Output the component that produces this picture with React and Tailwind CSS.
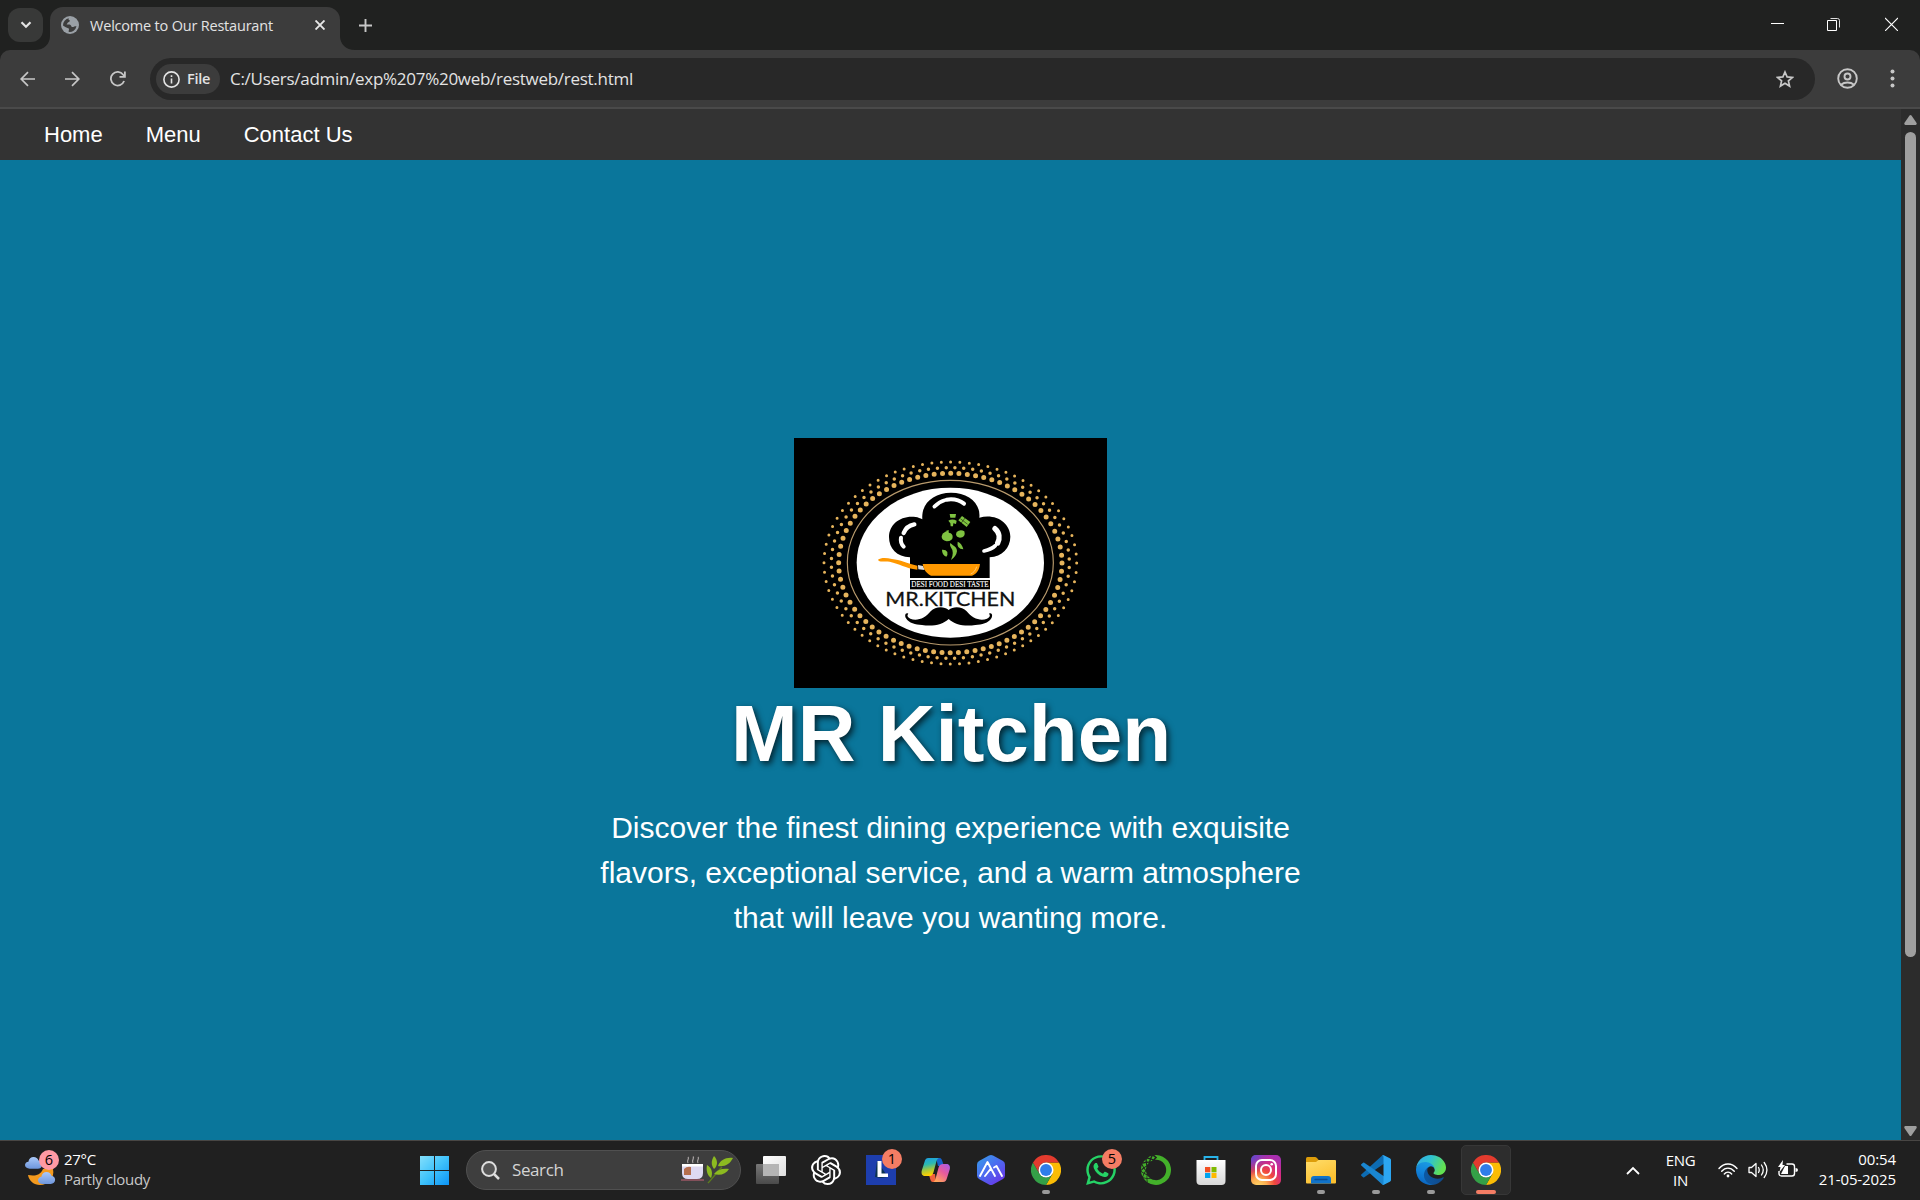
import React from "react";
import { SiOpenai, SiAnaconda } from "react-icons/si";
import { FaWhatsapp } from "react-icons/fa";

const UI = "font-['Open_Sans','Noto_Sans',sans-serif]";

function TabStrip() {
  return (
    <div className="flex h-[50px] items-start bg-[#202120]">
      <button className="ml-2 mt-2 flex h-[34px] w-[35px] items-center justify-center rounded-[12px] bg-[#383938]">
        <svg width="12" height="8" viewBox="0 0 12 8" fill="none" stroke="#e3e3e3" strokeWidth="2.2">
          <path d="M1.5 1.2 6 5.7l4.500-4.500" />
        </svg>
      </button>
      <svg className="-ml-2 mt-[36px] shrink-0" width="15" height="14" viewBox="0 0 15 14" fill="#3c3c3c">
        <path d="M15 0v14H0C9 14 15 8 15 0z" />
      </svg>
      <div className="mt-[7px] flex h-[43px] w-[290px] items-center rounded-t-[13px] bg-[#3c3c3c] pl-[11px] pr-[15px]">
        <svg width="18" height="18" viewBox="0 0 18 18" className="-mt-[7px]">
          <circle cx="9" cy="9" r="9" fill="#9aa0a6" />
          <path d="M8 2.300c-1 1-.3 1.700.6 2C9.500 5 8 6 7 6.500c-1 .5-.5 1.500-1.500 2 1 .3 3-.2 4 .5 1.200.9.600 1.800 1.500 2 1.200.3 2.500-1 4.500-.700A7 7 0 0 1 7.500 15.800c.5-.8 0-1.500.5-2.300.3-.8-.5-1.300-1.500-1.500C5 11.500 3.500 10.500 2 9.500A7 7 0 0 1 8 2.300z" fill="#3c3c3c" />
          <path d="M12 2.700c-1 .8-1.500 1.500-.5 2.300 1 .6 1.500.200 2 1.200.4.800 1.200 1 2 .8A7 7 0 0 0 12 2.700z" fill="#9aa0a6" />
        </svg>
        <span className="-mt-[6px] ml-[11px] whitespace-nowrap text-[14.500px] leading-5 tracking-[-0.2px] text-[#e3e3e3]">Welcome to Our Restaurant</span>
        <svg className="-mt-[7px] ml-auto" width="10" height="10" viewBox="0 0 10 10" stroke="#e8e8e8" strokeWidth="1.900">
          <path d="m.5.5 9 9M9.500.5l-9 9" />
        </svg>
      </div>
      <svg className="mt-[36px] shrink-0" width="15" height="14" viewBox="0 0 15 14" fill="#3c3c3c">
        <path d="M0 0v14h15C6 14 0 8 0 0z" />
      </svg>
      <svg className="ml-[4px] mt-[19px] shrink-0" width="13" height="13" viewBox="0 0 13 13" stroke="#c7c7c7" strokeWidth="1.900">
        <path d="M6.500 0v13M0 6.500h13" />
      </svg>
      <div className="ml-auto mr-[22px] mt-[17px] flex items-center">
        <svg width="13" height="14" viewBox="0 0 13 14" stroke="#fff" strokeWidth="1"><path d="M0 6.500h13" /></svg>
        <svg className="ml-[43px]" width="13" height="14" viewBox="0 0 13 14" fill="none" stroke="#fff">
          <path d="M.5 3.500h9v10h-9z" />
          <path d="M3.500 1.500h7a2 2 0 0 1 2 2v7" stroke="#ddd" />
        </svg>
        <svg className="ml-[45px]" width="13" height="14" viewBox="0 0 13 14" stroke="#fff" strokeWidth="1.100"><path d="m0 1 13 13M13 1 0 14" /></svg>
      </div>
    </div>
  );
}

function Toolbar() {
  return (
    <div className="bg-[#202120]">
      <div className="flex h-[59px] items-center rounded-t-[10px] border-b-2 border-[#4a4a4a] bg-[#3c3c3c] pl-[20px]">
        <svg width="15" height="16" viewBox="0 0 15 16" fill="none" stroke="#c7c7c7" strokeWidth="1.700">
          <path d="M15 8H1.500M8 1.200 1.200 8 8 14.800" />
        </svg>
        <svg className="ml-[30px]" width="15" height="16" viewBox="0 0 15 16" fill="none" stroke="#c7c7c7" strokeWidth="1.700">
          <path d="M0 8h13.500M7 1.200 13.800 8 7 14.800" />
        </svg>
        <svg className="ml-[30px]" width="16" height="16" viewBox="0 0 16 16" fill="none" stroke="#c7c7c7" strokeWidth="1.800">
          <path d="M14.100 10A6.800 6.800 0 1 1 13.200 3.700L14.600 5.500M14.900.5v5.400H9.500" />
        </svg>
        <div className="ml-[24px] mt-px flex h-[42px] w-[1665px] items-center rounded-full bg-[#282828] pl-[6px] pr-[21px]">
          <div className="flex h-[30px] w-[64px] items-center rounded-full bg-[#3c3c3c] pl-[7px]">
            <svg width="17" height="17" viewBox="0 0 17 17" fill="none" stroke="#e3e3e3" strokeWidth="1.600">
              <circle cx="8.500" cy="8.500" r="7.600" />
              <path d="M8.500 7.500v5M8.500 4.200v1.900" />
            </svg>
            <span className="ml-[7px] text-[14.500px] font-semibold leading-5 tracking-[-0.3px] text-[#e3e3e3]">File</span>
          </div>
          <span className="ml-[10px] whitespace-nowrap text-[17px] leading-6 tracking-[-0.280px] text-[#e3e3e3]">C:/Users/admin/exp%207%20web/restweb/rest.html</span>
          <svg className="ml-auto" width="18" height="18" viewBox="0 0 18 18" fill="none" stroke="#c7c7c7" strokeWidth="1.700">
            <path d="m9 2 2.100 4.900 5.300.5-4 3.500 1.200 5.200L9 13.300l-4.600 2.800 1.200-5.200-4-3.500 5.300-.5z" />
          </svg>
        </div>
        <svg className="ml-[22px]" width="21" height="21" viewBox="0 0 21 21" fill="none" stroke="#c7c7c7" strokeWidth="1.900">
          <circle cx="10.500" cy="10.500" r="9.300" />
          <circle cx="10.500" cy="8.500" r="3" />
          <path d="M4 16.800c3.500-3 9.500-3 13 0" />
        </svg>
        <svg className="ml-[32px]" width="5" height="19" viewBox="0 0 5 19" fill="#c7c7c7">
          <circle cx="2.500" cy="2.500" r="2" /><circle cx="2.500" cy="9.500" r="2" /><circle cx="2.500" cy="16.500" r="2" />
        </svg>
      </div>
    </div>
  );
}

function KitchenLogo() {
  return (
    <svg width="313" height="250" viewBox="42 39 939 750" className="block bg-black">
      <g fill="none" stroke="#e6b45c" strokeLinecap="round">
        <ellipse cx="511" cy="414" rx="335" ry="269" strokeWidth="15" pathLength="76" strokeDasharray="0 1" />
        <ellipse cx="511" cy="414" rx="357" ry="286" strokeWidth="10.500" pathLength="76" strokeDasharray="0 1" strokeDashoffset="0.5" />
        <ellipse cx="511" cy="414" rx="379" ry="303" strokeWidth="9" pathLength="76" strokeDasharray="0 1" />
      </g>
      <ellipse cx="511" cy="413" rx="309" ry="247" fill="none" stroke="#b99b6d" strokeWidth="3.500" />
      <ellipse cx="511" cy="413" rx="281" ry="225" fill="#fff" />
      <path d="M390 459V397C350 396 327 370 327 336c0-38 35-66 80-60 7 1 14 4 20 7-4-48 34-80 86-80s90 32 85 75c48-14 93 15 93 57 0 33-25 60-62 62v62z" fill="#000" />
      <g fill="none" stroke="#fff" strokeLinecap="round">
        <path d="M463 245c11-11 20-16 31-19" strokeWidth="11" />
        <path d="M500 224c20-3 38 1 52 12" strokeWidth="12" />
        <path d="M403 298c-17 3-27 13-32 26" strokeWidth="13" />
        <path d="M363 338c-2 11 2 21 8 27" strokeWidth="12" />
        <path d="M645 311c14 12 15 29 8 43" strokeWidth="16" />
        <path d="M646 362c-8 8-20 13-34 16" strokeWidth="11" />
      </g>
      <g fill="#7fc241">
        <path d="M509 267h19l-2 11h-15zM505 287q12-7 25 0l-2 10-8-2-1 9h-7l-1-9z" />
        <path d="m546 273 25 18-11 15-25-20z" />
        <path d="m541 281 22 17m-8-19-12 16" stroke="#000" strokeWidth="1.500" />
        <path d="M494 322q8-7 14 2 10 1 10 12 0 12-18 13-16-3-15-15 2-10 9-12zM497 318l9-3v6z" />
        <path d="M530 321q11-9 23-2 4 13-6 18-17 4-19-9z" />
        <path d="M511 354q-3 8 1 12 12 15 1 39 16-11 18-26 0-12-12-18zM533 350q12 4 17 23-21-1-17-23zM486 374q12-1 16 7 2 9-3 14-13-4-13-21z" />
      </g>
      <path d="M294 404c8-6 24-6 42-2 25 2 44 13 76 20v12c-37-5-53-17-83-24-20-2-31 3-35-6z" fill="#ff9800" />
      <path d="m414 420 15 3 5 12-19-2z" fill="#ddd" />
      <path d="M428 417h172c-2 19-11 30-24 35H453c-15-8-22-18-25-35z" fill="#ff9800" />
      <path d="M590 425q-5 17-18 22" fill="none" stroke="#ffd9a0" strokeWidth="2" />
      <rect x="390" y="465" width="240" height="28" />
      <text x="394" y="487" textLength="232" lengthAdjust="spacingAndGlyphs" fill="#fff" stroke="#fff" strokeWidth="0.4" className="font-['Liberation_Serif',serif] text-[25px]">DESI FOOD DESI TASTE</text>
      <text x="316" y="543" textLength="390" lengthAdjust="spacingAndGlyphs" fill="#111" stroke="#111" strokeWidth="0.8" className="font-['Lato',sans-serif] text-[57px]">MR.KITCHEN</text>
      <path d="M506 555c-14-12-40-11-54 4-16 21-42 31-61 22-9-4-11-11-6-15-9-5-12 6-7 14 9 15 28 19 48 20 32 5 63-1 80-18 17 17 48 23 80 18 20-1 39-5 48-20 5-8 2-19-7-14 5 4 3 11-6 15-19 9-45-1-61-22-14-15-40-16-54-4z" />
    </svg>
  );
}

function Page() {
  return (
    <div className="flex h-[1031px]">
      <div className="flex w-[1901px] flex-col bg-[#0a769b] font-['Liberation_Sans',Arial,sans-serif] text-white">
        <nav className="flex h-[51px] items-center gap-[43px] bg-[#333] pl-[44px] text-[22px] leading-[25px]">
          <a>Home</a>
          <a>Menu</a>
          <a>Contact Us</a>
        </nav>
        <main className="flex flex-1 flex-col items-center pt-[278px]">
          <KitchenLogo />
          <h1 className="pl-px text-[80px] font-bold leading-[92px] [text-shadow:2.5px_2.5px_6.25px_rgba(0,0,0,0.7)]">MR Kitchen</h1>
          <p className="mt-[25px] w-[720px] text-center text-[30px] leading-[45px]">
            Discover the finest dining experience with exquisite flavors, exceptional service, and a warm atmosphere that will leave you wanting more.
          </p>
        </main>
      </div>
      <div className="flex w-[19px] flex-col items-center bg-[#2c2c2c] pt-[6px]">
        <svg width="13" height="10" viewBox="0 0 13 10" fill="#9f9f9f"><path d="M5.500.6q1-1 2 0L12.600 8q.5 1.800-1 2H1.400q-1.500-.2-1-2z" /></svg>
        <div className="mt-[7px] h-[825px] w-[11px] rounded-full bg-[#9f9f9f]" />
        <svg className="mb-[4px] mt-auto" width="13" height="10" viewBox="0 0 13 10" fill="#9f9f9f"><path d="M5.500 9.400q1 1 2 0L12.600 2q.5-1.800-1-2H1.400q-1.500.2-1 2z" /></svg>
      </div>
    </div>
  );
}

function Chrome() {
  return (
    <svg width="30" height="30" viewBox="0 0 48 48">
      <path d="M24 12h20.800A24 24 0 0 1 24 48l10.400-18z" fill="#fbbc05" />
      <path d="M3.200 12A24 24 0 0 0 24 48l10.400-18A12 12 0 0 1 13.600 30z" fill="#34a047" />
      <path d="M3.200 12A24 24 0 0 1 44.800 12H24a12 12 0 0 0-10.400 18z" fill="#e33b2e" />
      <circle cx="24" cy="24" r="12" fill="#fff" />
      <circle cx="24" cy="24" r="9.500" fill="#2f7de9" />
    </svg>
  );
}

function TaskView() {
  return (
    <svg width="30" height="30" viewBox="0 0 30 30">
      <defs>
        <linearGradient id="tvA" x2="0" y2="1"><stop stopColor="#777" /><stop offset="1" stopColor="#4a4a4a" /></linearGradient>
        <linearGradient id="tvB" x2="1" y2="1"><stop stopColor="#fff" /><stop offset="1" stopColor="#dedede" /></linearGradient>
      </defs>
      <rect y="9" width="23" height="20" rx="1" fill="url(#tvA)" />
      <rect x="7" y="1" width="23" height="20" rx="1" fill="url(#tvB)" />
      <path d="M7 9h16v12H7z" fill="#b5b5b5" />
    </svg>
  );
}

function LApp() {
  return (
    <svg width="30" height="30" viewBox="0 0 30 30">
      <path d="M0 0h30v30H0z" fill="#1d3eae" />
      <path d="m11 6-2 16 6 1 7-1z" fill="#0c3350" />
      <path d="M11.500 6h4v12.500H22V22H11.500z" fill="#fff" />
    </svg>
  );
}

function Copilot() {
  return (
    <svg width="30" height="30" viewBox="0 0 30 30">
      <defs>
        <linearGradient id="cpA" x2="0.2" y2="1"><stop stopColor="#1b9de8" /><stop offset=".4" stopColor="#2cb9b0" /><stop offset=".7" stopColor="#a5c83c" /><stop offset="1" stopColor="#ffd000" /></linearGradient>
        <linearGradient id="cpB" x1="1" x2="0.3" y2="1"><stop stopColor="#a35cf0" /><stop offset=".5" stopColor="#e85a9c" /><stop offset="1" stopColor="#ffa45c" /></linearGradient>
      </defs>
      <path d="M15 3h3.500c2 0 2.500 2 3.300 4.500L23 11h-6z" fill="#1460c9" />
      <path d="M15 27h-3c-2.200 0-2.500-2-3.400-5L7.500 19H14z" fill="#f0603c" />
      <path d="M7.500 3H18c-1.500.5-2 1.500-2.600 3.500l-3 11C11.500 20.500 10 21 8 21H4c-3 0-4-2.500-3.200-5.500L3.500 7C4.300 4.500 5 3 7.500 3z" fill="url(#cpA)" />
      <path d="M22 27H12c1.500-.5 2-1.500 2.600-3.500l3-11C18.500 9.500 20 9 22 9h3.500c3 0 4 2.500 3.200 5.500L26 23c-.8 2.500-1.500 4-4 4z" fill="url(#cpB)" />
    </svg>
  );
}

function HexApp() {
  return (
    <svg width="30" height="30" viewBox="0 0 30 30">
      <defs><linearGradient id="hx" x2="0.8" y2="1"><stop stopColor="#35a0e8" /><stop offset=".5" stopColor="#4b6cf0" /><stop offset="1" stopColor="#6a35e8" /></linearGradient></defs>
      <path d="M13 .6q2-1 4 0l10 5.500q2 1.200 2 3.400v11q0 2.200-2 3.400l-10 5.500q-2 1-4 0L3 23.900q-2-1.200-2-3.400v-11q0-2.200 2-3.400z" fill="url(#hx)" />
      <path d="m4 21 7.500-14 7.500 14M9 21l5.500-7M18 12.500l2.500-1.500L26 21" fill="none" stroke="#fff" strokeWidth="1.900" strokeLinecap="round" strokeLinejoin="round" />
    </svg>
  );
}

function Store() {
  return (
    <svg width="30" height="30" viewBox="0 0 30 30">
      <defs><linearGradient id="st" x2="0" y2="1"><stop stopColor="#fff" /><stop offset="1" stopColor="#d8d8d8" /></linearGradient></defs>
      <path d="M8.500 6V2h13v4" fill="none" stroke="#28b4ea" strokeWidth="1.800" />
      <path d="M.5 5h29v21q0 4-4 4h-21q-4 0-4-4z" fill="url(#st)" />
      <path d="M9 12h5.300v5.300H9z" fill="#f25022" /><path d="M15.500 12h5v5.300h-5z" fill="#7fba00" />
      <path d="M9 18h5.300v5H9z" fill="#00a4ef" /><path d="M15.500 18h5v5h-5z" fill="#ffb900" />
    </svg>
  );
}

function Insta() {
  return (
    <svg width="30" height="30" viewBox="0 0 30 30">
      <defs>
        <radialGradient id="igA" cx=".25" cy="1.050" r="1.100"><stop stopColor="#ffd868" /><stop offset=".25" stopColor="#fbad50" /><stop offset=".5" stopColor="#f0483c" /><stop offset=".75" stopColor="#d62b83" /><stop offset="1" stopColor="#a92fb0" /></radialGradient>
        <radialGradient id="igB" cx="-.05" cy="0" r=".7"><stop stopColor="#4453d8" /><stop offset="1" stopColor="#7a3ac9" stopOpacity="0" /></radialGradient>
      </defs>
      <rect width="30" height="30" rx="5" fill="url(#igA)" /><rect width="30" height="30" rx="5" fill="url(#igB)" />
      <g fill="none" stroke="#fff" strokeWidth="2"><rect x="5" y="5" width="20" height="20" rx="6" /><circle cx="15" cy="15" r="5" /></g>
      <circle cx="20.700" cy="9.300" r="1.300" fill="#fff" />
    </svg>
  );
}

function Explorer() {
  return (
    <svg width="30" height="30" viewBox="0 0 30 30">
      <defs><linearGradient id="ex" x2="0.5" y2="1"><stop stopColor="#ffdd6b" /><stop offset="1" stopColor="#fcc02f" /></linearGradient></defs>
      <path d="M0 3.500Q0 2 1.500 2H9q1 0 2 1l2 2.500V10H0z" fill="#dd9d0a" />
      <path d="M0 7h10l2.500-2H29q1 0 1 1v21.500q0 1-1 1H1q-1 0-1-1z" fill="url(#ex)" />
      <path d="M5 28.500V24q0-3 3-3h14q3 0 3 3v4.500z" fill="#1173c9" /><path d="M9 24.500h12" stroke="#0b4d94" strokeWidth="1.300" strokeLinecap="round" />
    </svg>
  );
}

function VsCode() {
  return (
    <svg width="30" height="30" viewBox="0 0 100 100">
      <path d="M96 13 76 2Q72 0 69 3L1 65q-2 2 0 4l6 5q2 1.500 4 0L92 18q8-4 8 2z" fill="#0d6cb3" />
      <path d="M96 87 76 98Q72 100 69 97L1 35q-2-2 0-4l6-5q2-1.500 4 0l81 56q8 4 8-2z" fill="#1a86d0" />
      <path d="M76 99q-4 1.500-7-2 6 3 6-4V7q0-7-6-4 3-3.500 7-2l20 9.500q4 2 4 6V83q0 4-4 6z" fill="#2ca6f2" />
    </svg>
  );
}

function Edge() {
  return (
    <svg width="30" height="30" viewBox="0 0 256 256">
      <defs>
        <linearGradient id="edA" x2="1"><stop stopColor="#0c59a4" /><stop offset="1" stopColor="#114a8b" /></linearGradient>
        <linearGradient id="edB" x1=".6" x2=".3" y2="1"><stop stopColor="#1b9de2" /><stop offset=".5" stopColor="#1283da" /><stop offset="1" stopColor="#0a62bd" /></linearGradient>
        <linearGradient id="edC" x2="1" y2=".35"><stop stopColor="#35a9e8" /><stop offset=".5" stopColor="#2fc2d0" /><stop offset="1" stopColor="#62e052" /></linearGradient>
      </defs>
      <path d="M231 190.500a93.700 93.700 0 0 1-10.500 4.700 101.900 101.900 0 0 1-35.900 6.500c-47.300 0-88.500-32.500-88.500-74.300a31.500 31.500 0 0 1 16.400-27.300C69.700 101.900 58.700 146.500 58.700 172.600c0 73.900 68.100 81.400 82.800 81.400 7.900 0 19.800-2.300 27-4.600l1.300-.4a128.300 128.300 0 0 0 66.600-52.800 4 4 0 0 0-5.400-5.700z" fill="url(#edA)" />
      <path d="M105.700 241.400a79.200 79.200 0 0 1-22.700-21.300A80.700 80.700 0 0 1 112.500 100.100c3.100-1.500 8.400-4.100 15.500-4a32.400 32.400 0 0 1 25.700 13 31.900 31.900 0 0 1 6.300 18.700c0-.2 24.500-79.600-80-79.600C36.100 48.200 0 89.900 0 126.500a130.600 130.600 0 0 0 12.100 56 128 128 0 0 0 156.400 67.100 75.500 75.500 0 0 1-62.800-8.200z" fill="url(#edB)" />
      <path d="M152.300 148.900c-.8 1-3.300 2.500-3.300 5.700 0 2.600 1.700 5.100 4.700 7.300 14.400 10 41.500 8.600 41.600 8.600 10.700 0 21.100-2.900 30.300-8.300A61.400 61.400 0 0 0 256 109.200c.3-22.400-8-37.300-11.300-43.900C223.500 23.900 177.700 0 128 0 57.900 0 1 56.300 0 126.400c.5-36.500 36.800-66 80-66 3.500 0 23.500.3 42 10.100 16.300 8.600 24.900 18.900 30.800 29.200 6.200 10.700 7.300 24.100 7.300 29.500s-2.700 13.300-7.800 19.700z" fill="url(#edC)" />
    </svg>
  );
}

function Badge({ children }) {
  return <span className="absolute right-[4px] top-[4px] flex size-5 items-center justify-center rounded-full bg-[#f47d64] text-[14.500px] leading-none text-black">{children}</span>;
}

function Cell({ children, running, active }) {
  return (
    <div className={"relative flex size-[50px] shrink-0 items-center justify-center " + (active ? "rounded-[5px] border border-[#373737] bg-[#2d2d2d]" : "")}>
      {children}
      {running && <span className="absolute bottom-[1px] h-1 w-2 rounded-full bg-[#9a9a9a]" />}
      {active && <span className="absolute bottom-0 h-1 w-5 rounded-full bg-[#f47d64]" />}
    </div>
  );
}

const CLOUD = "M5 13C2 13 0 11.300 0 9c0-2 1.500-3.600 3.600-3.800C4 2.200 6.200 0 9 0c2.600 0 4.500 1.600 5.200 4C16.400 4.200 18 6 18 8.500c0 2.600-2 4.500-4.500 4.500z";

function Weather() {
  return (
    <div className="flex w-[410px] items-center pl-[25px]">
      <div className="relative -mt-[4px] h-[36px] w-[34px]">
        <svg width="34" height="36" viewBox="0 0 34 36">
          <defs><linearGradient id="cl" x2="0" y2="1"><stop stopColor="#a9c8f8" /><stop offset="1" stopColor="#6e96dc" /></linearGradient></defs>
          <g transform="translate(0 7) scale(.95 .9)"><path d={CLOUD} fill="url(#cl)" /></g>
          <path d="M3 25c6 1 12 1 15-6h10c2 9-5 16-13 16C9 35 4 31 3 25z" fill="#f39a1e" />
          <g transform="translate(13 22) scale(.95 .92)"><path d={CLOUD} fill="url(#cl)" /></g>
        </svg>
        <span className="absolute left-[14px] top-0 flex size-5 items-center justify-center rounded-full bg-[#ff99a4] text-[14.500px] leading-none text-black">6</span>
      </div>
      <div className="-mt-[3px] ml-[5px] text-[15px] leading-5 tracking-[-0.3px]">
        <div className="text-white">27°C</div>
        <div className="text-[#c8c8c8]">Partly cloudy</div>
      </div>
    </div>
  );
}

function SearchBox() {
  return (
    <div className="ml-[6px] mr-[5px] flex h-10 w-[275px] items-center rounded-full border border-[#505050] bg-[#3e3e3e] pl-[14px] pr-[7px]">
      <svg width="19" height="19" viewBox="0 0 19 19" fill="none" stroke="#dedede">
        <circle cx="8" cy="8" r="6.900" strokeWidth="2" fill="#555" /><path d="m13 13 5 5" strokeWidth="2.500" />
      </svg>
      <span className="ml-[12px] text-[17px] leading-6 tracking-[-0.4px] text-[#d4d4d4]">Search</span>
      <svg className="ml-auto" width="52" height="28" viewBox="0 0 52 28">
        <path d="M7 1c2 2-2 3 0 6M12 .5c2 2-2 3.500 0 6.500M17 1c2 2-2 3 0 6" fill="none" stroke="#aaa5a5" strokeWidth="1.200" />
        <path d="M1 8h21v9q0 6-6 6H7q-6 0-6-6z" fill="#ded9f2" /><path d="M1 8h21v2.500H1z" fill="#fff" />
        <path d="M3 13q3-3 7-2v8H3z" fill="#b56e4e" /><path d="M0 23h23v2H0z" fill="#83505a" />
        <path d="M27 27c4-4 9-11 14-16" fill="none" stroke="#5d7d1c" strokeWidth="1.500" />
        <g fill="#8cba20"><path d="M33 0c4 4 4 10 0 13-3-4-3-8 0-13z" /><path d="M37 10c2-6 8-9 15-8-3 6-8 9-15 8z" /><path d="M26 9c5 3 6 8 4 13-4-3-5-8-4-13z" /><path d="M33 18c3-4 8-6 15-5-3 5-9 7-15 5z" /></g>
      </svg>
    </div>
  );
}

function Tray() {
  return (
    <div className="ml-auto flex items-center pr-[24px] text-[15px] leading-5 tracking-[-0.3px] text-white">
      <svg width="14" height="9" viewBox="0 0 14 9" fill="none" stroke="#fff" strokeWidth="1.800"><path d="m1 8 6-6 6 6" /></svg>
      <div className="-mt-px ml-[21px] w-[39px] text-center"><div>ENG</div><div>IN</div></div>
      <svg className="ml-[18px]" width="20" height="15" viewBox="0 0 20 15" fill="none" stroke="#fff" strokeWidth="1.400" strokeLinecap="round">
        <path d="M1 5.500c5-6 13-6 18 0M3.700 8.300c3.500-4.200 9-4.200 12.600 0M6.300 11c2-2.500 5.400-2.500 7.400 0" /><circle cx="10" cy="13" r="1.400" fill="#fff" stroke="none" />
      </svg>
      <svg className="ml-[10px]" width="20" height="18" viewBox="0 0 20 18" fill="none" stroke="#fff" strokeWidth="1.300" strokeLinecap="round" strokeLinejoin="round">
        <path d="M1 6.500h2.500L8 2.500v13L3.500 11.500H1zM10.500 6.500q1.500 2.500 0 5M13.500 4q3.500 5 0 10M16.200 1.500q5.500 7.500 0 15" />
      </svg>
      <svg className="-mt-[2px] ml-[10px]" width="20" height="18" viewBox="0 0 20 18">
        <path d="M8.500 4H14q2.500 0 2.500 2.500v7q0 2.500-2.500 2.500H3.500Q1 16 1 13.500V11" fill="none" stroke="#fff" strokeWidth="1.400" />
        <path d="M17.500 8q2.500 0 2.500 2t-2.500 2zM3 14l4-8h3v8z" fill="#fff" /><path d="M5 0 0 7h2.500L1.500 12 7 5H4.500z" fill="#fff" />
      </svg>
      <div className="-mt-[3px] ml-[19px] w-[79px] whitespace-nowrap text-right tracking-[-0.100px]"><div>00:54</div><div>21-05-2025</div></div>
    </div>
  );
}

function Taskbar() {
  return (
    <div className={"flex h-[60px] items-center border-t border-[#484644] bg-[#202020] pb-px " + UI}>
      <Weather />
      <Cell>
        <svg width="30" height="30" viewBox="0 0 30 30">
          <defs><linearGradient id="wn" x2="30" y2="30" gradientUnits="userSpaceOnUse"><stop stopColor="#86e0fb" /><stop offset=".5" stopColor="#3fc2fb" /><stop offset="1" stopColor="#0a92f5" /></linearGradient></defs>
          <path d="M0 1h14v14H0zM15 1h14v14H15zM0 16h14v14H0zM15 16h14v14H15z" fill="url(#wn)" />
        </svg>
      </Cell>
      <SearchBox />
      <div className="flex gap-[5px]">
        <Cell><TaskView /></Cell>
        <Cell><SiOpenai size={30} color="#fff" /></Cell>
        <Cell><LApp /><Badge>1</Badge></Cell>
        <Cell><Copilot /></Cell>
        <Cell><HexApp /></Cell>
        <Cell running><Chrome /></Cell>
        <Cell><FaWhatsapp size={34} color="#25d366" /><Badge>5</Badge></Cell>
        <Cell><SiAnaconda size={30} color="#43b02a" /></Cell>
        <Cell><Store /></Cell>
        <Cell><Insta /></Cell>
        <Cell running><Explorer /></Cell>
        <Cell running><VsCode /></Cell>
        <Cell running><Edge /></Cell>
        <Cell active><Chrome /></Cell>
      </div>
      <Tray />
    </div>
  );
}

export default function App() {
  return (
    <div className="flex h-[1200px] w-[1920px] flex-col overflow-hidden bg-[#202120]">
      <header className={UI}>
        <TabStrip />
        <Toolbar />
      </header>
      <Page />
      <Taskbar />
    </div>
  );
}
